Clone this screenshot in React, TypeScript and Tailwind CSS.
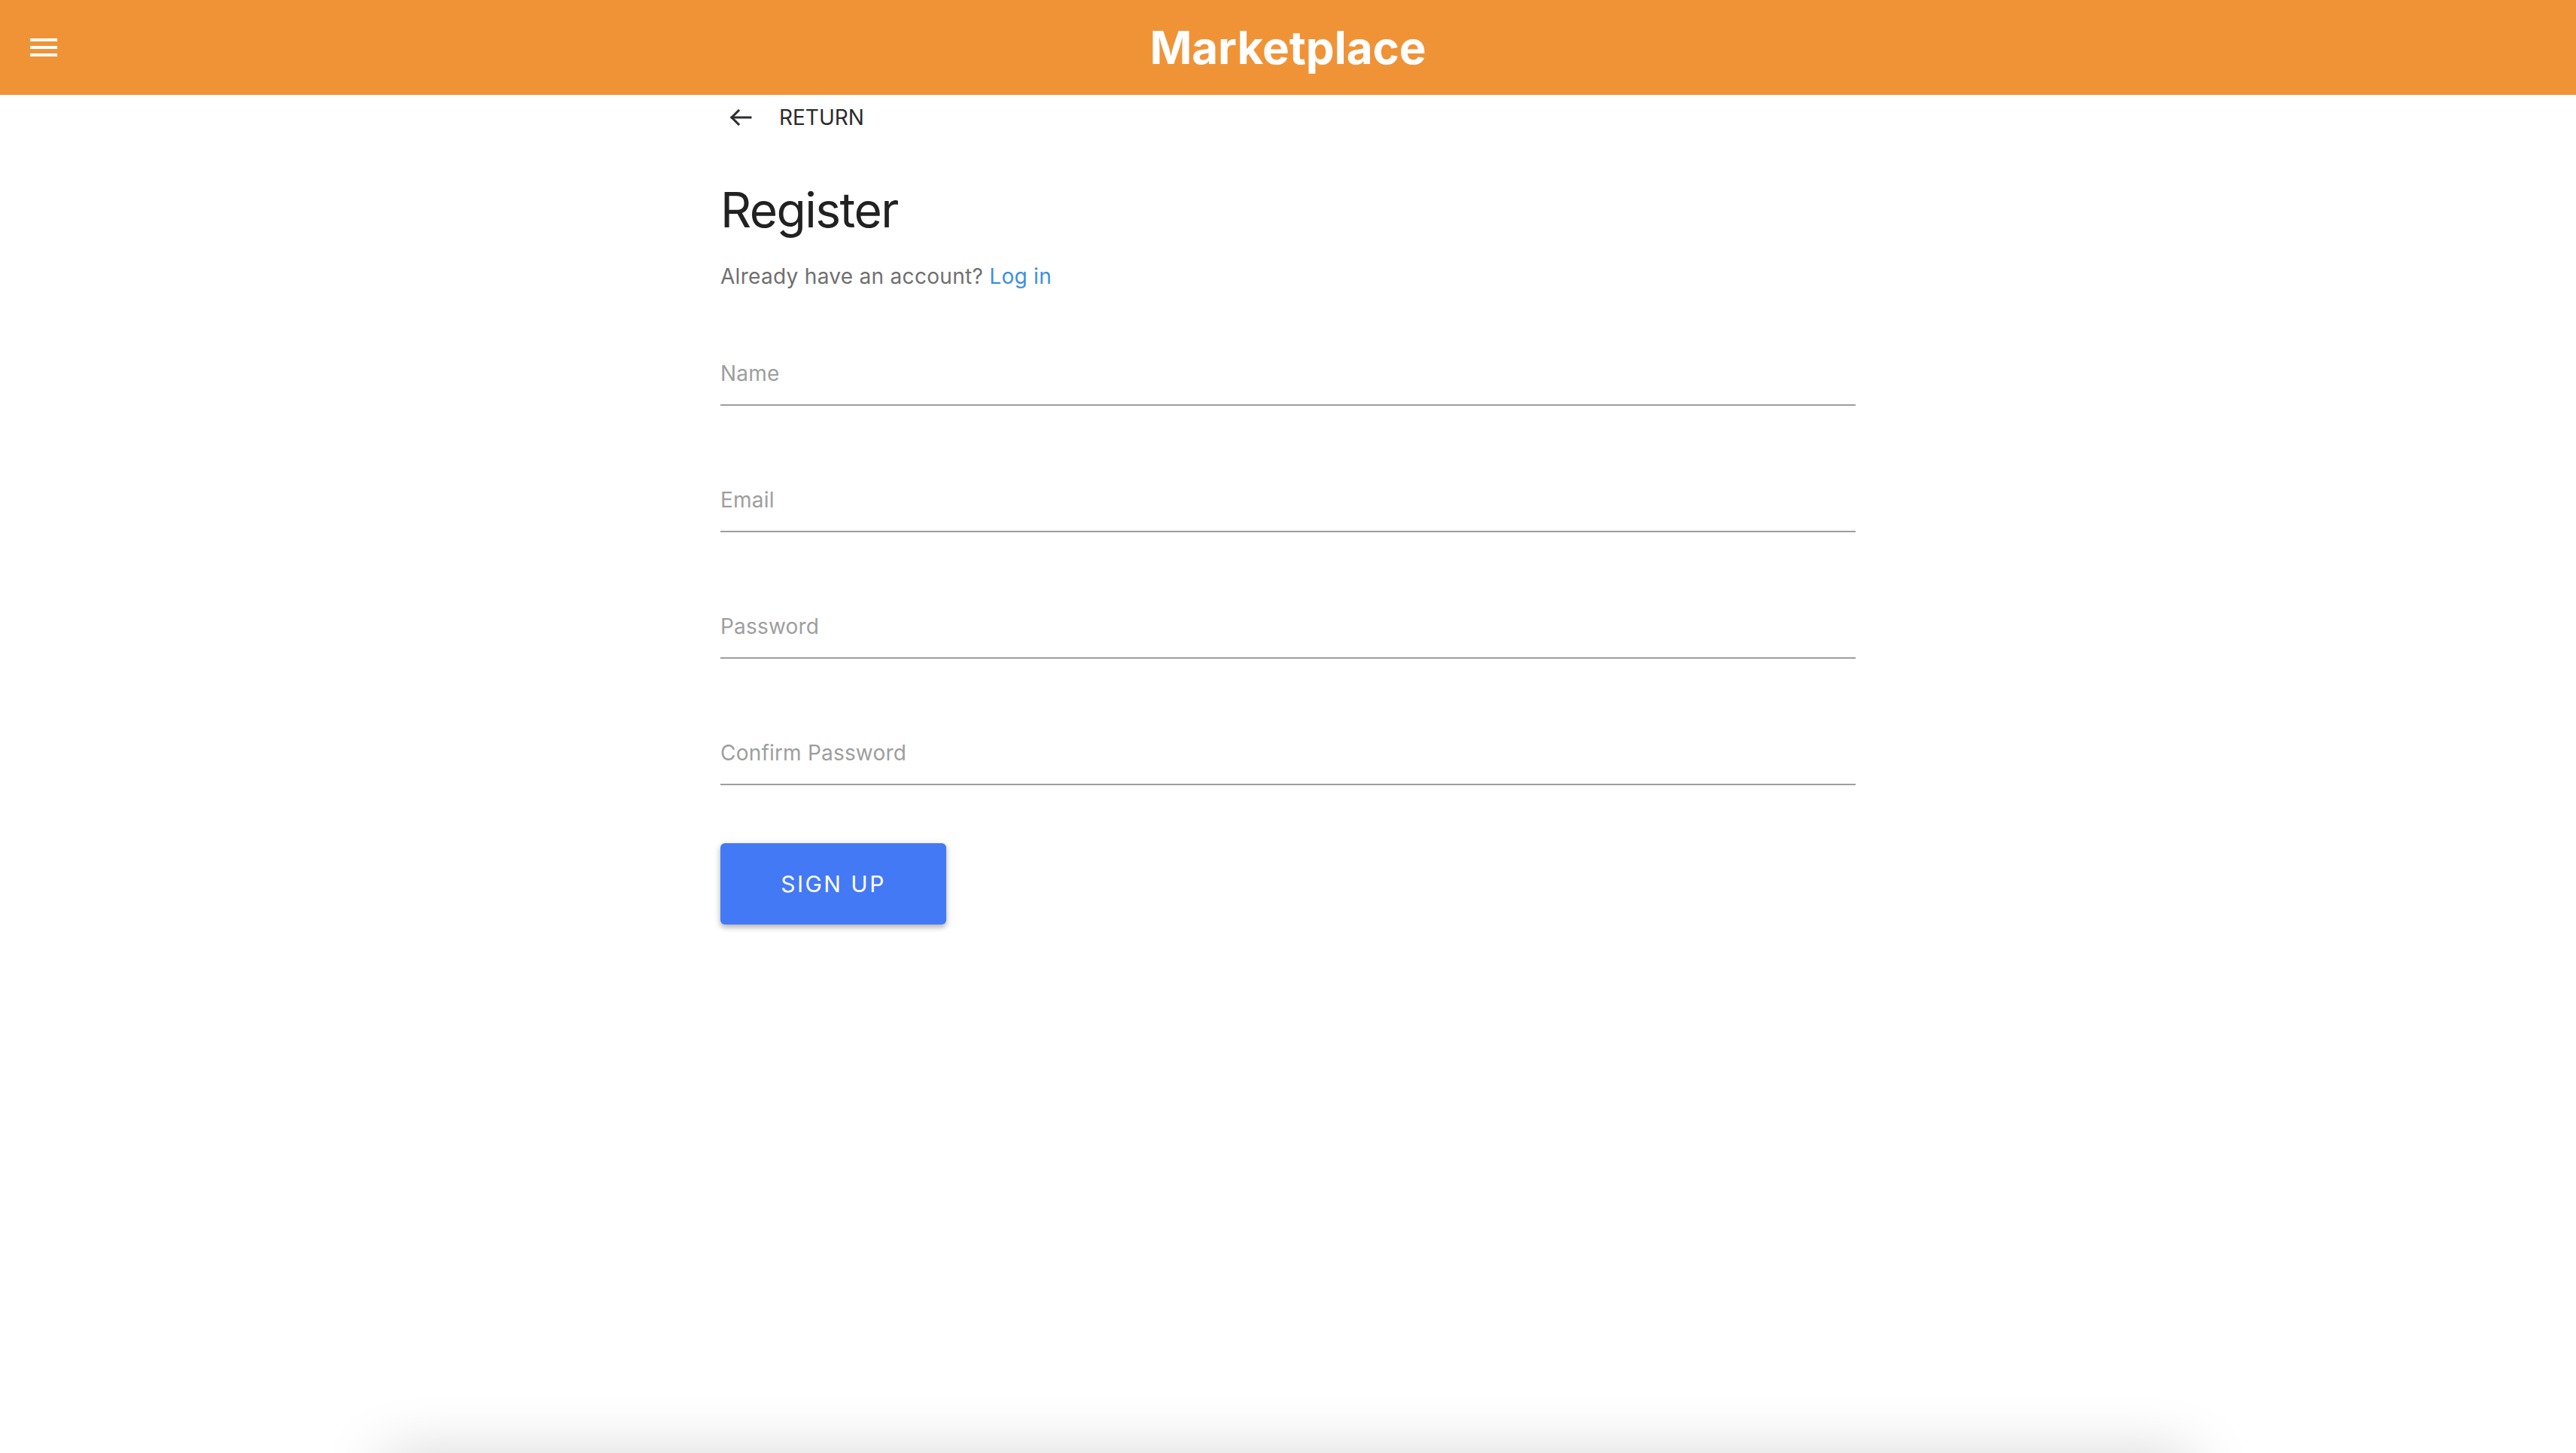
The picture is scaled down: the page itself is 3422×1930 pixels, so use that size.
import React from "react";

const fields = ["Name", "Email", "Password", "Confirm Password"];

function MenuIcon() {
  return (
    <svg width="36" height="24" viewBox="0 0 36 24" fill="white">
      <rect x="0" y="0" width="36" height="4" />
      <rect x="0" y="10" width="36" height="4" />
      <rect x="0" y="20" width="36" height="4" />
    </svg>
  );
}

function ArrowBack() {
  return (
    <svg width="30" height="22" viewBox="0 0 30 22" fill="none" stroke="#2e2e2e" strokeWidth="3" strokeLinecap="square">
      <path d="M28 11H3" />
      <path d="M12 2L3 11l9 9" />
    </svg>
  );
}

export default function App() {
  return (
    <div className="w-full h-[1930px] flex flex-col overflow-hidden bg-white font-['Inter',sans-serif]">
      <header className="h-[126px] shrink-0 bg-[#f09337] grid grid-cols-[1fr_auto_1fr] items-center">
        <div className="pl-[40px] flex items-center">
          <MenuIcon />
        </div>
        <h1 className="text-white text-[60px] leading-none font-bold">Marketplace</h1>
        <div />
      </header>

      <main className="flex-1 w-[1508px] mx-auto">
        <button className="h-[60px] flex items-center pl-[12px]">
          <ArrowBack />
          <span className="ml-[36px] text-[28px] leading-none text-[#2b2b2b] uppercase">Return</span>
        </button>

        <h2 className="mt-[61px] text-[64px] leading-none tracking-[-1.5px] text-[#212121]">Register</h2>
        <p className="mt-[42px] text-[28px] leading-none tracking-[0.3px] text-[#707070]">
          Already have an account? <a className="text-[#3b8fe4]">Log in</a>
        </p>

        <div className="mt-[101px] flex flex-col gap-[111px]">
          {fields.map((label) => (
            <div key={label} className="pb-[27px] border-b-2 border-[#9e9e9e]">
              <span className="block text-[28px] leading-none tracking-[0.2px] text-[#9e9e9e]">{label}</span>
            </div>
          ))}
        </div>

        <button className="mt-[77px] w-[300px] h-[108px] rounded-[6px] bg-[#4479f5] text-white text-[30px] tracking-[2.5px] font-normal shadow-[0_4px_6px_rgba(0,0,0,0.22),0_2px_12px_rgba(0,0,0,0.12)]">
          SIGN UP
        </button>
      </main>

      <div className="h-[75px] shrink-0 overflow-hidden">
        <div className="mt-[85px] mx-auto w-[2400px] h-[40px] bg-white shadow-[0_0_80px_rgba(0,0,0,0.25)]" />
      </div>
    </div>
  );
}
